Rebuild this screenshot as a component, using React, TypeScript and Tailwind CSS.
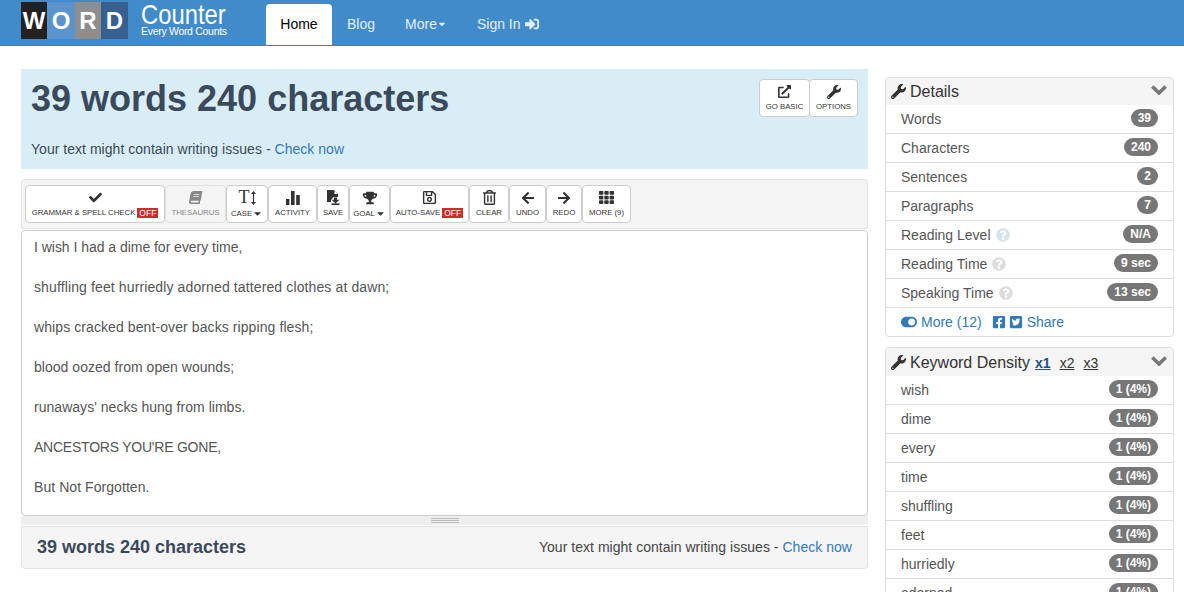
import type { ReactNode } from 'react';
import {
  FaArrowLeft,
  FaArrowRight,
  FaBook,
  FaCaretDown,
  FaCheck,
  FaExternalLinkAlt,
  FaFacebookSquare,
  FaQuestionCircle,
  FaRegSave,
  FaRegTrashAlt,
  FaSignInAlt,
  FaTh,
  FaToggleOn,
  FaTrophy,
  FaTwitterSquare,
  FaWrench,
} from 'react-icons/fa';

const poem = [
  { text: 'I wish I had a dime for every time,', spacing: 'tracking-[-0.03px]' },
  { text: 'shuffling feet hurriedly adorned tattered clothes at dawn;', spacing: 'tracking-[0.12px]' },
  { text: 'whips cracked bent-over backs ripping flesh;', spacing: 'tracking-[0.09px]' },
  { text: 'blood oozed from open wounds;', spacing: 'tracking-[0.03px]' },
  { text: "runaways' necks hung from limbs.", spacing: 'tracking-[0.03px]' },
  { text: "ANCESTORS YOU'RE GONE,", spacing: 'tracking-[-0.23px]' },
  { text: 'But Not Forgotten.', spacing: 'tracking-[0.06px]' },
];

const details = [
  { label: 'Words', value: '39' },
  { label: 'Characters', value: '240' },
  { label: 'Sentences', value: '2' },
  { label: 'Paragraphs', value: '7' },
  { label: 'Reading Level', value: 'N/A', help: true, blue: true },
  { label: 'Reading Time', value: '9 sec', help: true },
  { label: 'Speaking Time', value: '13 sec', help: true },
];

const keywords = ['wish', 'dime', 'every', 'time', 'shuffling', 'feet', 'hurriedly', 'adorned'];

function BarsIcon() {
  return (
    <svg width="14" height="14" viewBox="0 0 14 14" fill="currentColor">
      <rect x="0" y="8" width="3.4" height="6" />
      <rect x="5" y="0" width="3.6" height="14" />
      <rect x="10.2" y="4" width="3.6" height="10" />
    </svg>
  );
}

function SaveFileIcon() {
  return (
    <svg width="13" height="15" viewBox="0 0 13 15" fill="currentColor">
      <path d="M0 0h7l4 4v3H6.5L4 10v2H0z" />
      <path d="M7.5 0.5v3.5h3.5z" fill="#fff" />
      <path d="M7 7.5h3v2.2h2.4L8.5 13.6 4.6 9.7H7z" />
      <rect x="4.5" y="13.4" width="8" height="1.6" />
    </svg>
  );
}

function CaseIcon() {
  return (
    <span className="flex items-center">
      <span className="font-['Liberation_Serif',serif] text-[18px] leading-[15px]">T</span>
      <svg width="5" height="14" viewBox="0 0 5 14" fill="currentColor" className="ml-px">
        <path d="M2.5 0 5 3H3.1v8H5l-2.500 3L0 11h1.900V3H0z" />
      </svg>
    </span>
  );
}

function ChevronIcon() {
  return (
    <svg width="16" height="10" viewBox="0 0 16 10" fill="none" stroke="#777" strokeWidth="3.6" className="mb-[4px] ml-auto">
      <path d="M1.300 1.500 8 8l6.700-6.500" />
    </svg>
  );
}

function OffTag() {
  return <span className="ml-0.5 bg-[#c9302c] px-[2px] text-[8.5px] leading-[10px] text-white">OFF</span>;
}

function ToolButton({
  icon,
  children,
  className,
}: {
  icon: ReactNode;
  children: ReactNode;
  className: string;
}) {
  return (
    <button
      className={`flex h-[38px] shrink-0 flex-col items-center rounded border border-[#ccc] pt-[4px] text-[7.8px] leading-[10px] ${className}`}
    >
      <span className="flex h-[15px] items-center text-[15px]">{icon}</span>
      <span className="mt-[3px] flex items-center whitespace-nowrap">{children}</span>
    </button>
  );
}

function Badge({ children }: { children: ReactNode }) {
  return (
    <span className="-mt-[2px] rounded-[10px] bg-[#777] px-[7px] py-[3px] text-[12px] leading-[12px] font-bold text-white">
      {children}
    </span>
  );
}

function PanelHeader({ children, className }: { children: ReactNode; className: string }) {
  return (
    <div className={`flex items-center rounded-t bg-[#f5f5f5] pr-[6px] pl-[5px] text-[16px] text-[#333] ${className}`}>
      <FaWrench className="mr-[4px] text-[15px]" />
      {children}
      <ChevronIcon />
    </div>
  );
}

function Row({ children }: { children: ReactNode }) {
  return (
    <div className="flex h-[29px] items-center justify-between border-b border-[#ddd] px-[15px] text-[14px] text-[#555]">
      {children}
    </div>
  );
}

export default function App() {
  return (
    <div className="h-[592px] overflow-hidden bg-white font-['Liberation_Sans',Arial,sans-serif] text-[14px] text-[#333]">
      <nav className="flex h-[46px] border-b border-[#357ebd] bg-[#428bca] pl-[21px]">
        <div className="mt-[2px] flex h-[37px] w-[107px] self-start text-center text-[24px] leading-[37px] font-bold text-white">
          <span className="w-[26px] bg-[#222]">W</span>
          <span className="w-[28px] bg-[#5b93cc]">O</span>
          <span className="w-[26px] bg-[#8e8e8e]">R</span>
          <span className="w-[27px] bg-[#35608f]">D</span>
        </div>
        <div className="mt-[4px] ml-[13px] w-[90px] text-white">
          <div className="origin-left scale-x-[0.85] text-[28px] leading-[22px]">Counter</div>
          <div className="text-[10.5px] leading-[11px] tracking-[-0.3px]">Every Word Counts</div>
        </div>
        <ul className="ml-[35px] flex text-[14px] text-[#e3eef8]">
          <li className="mt-[4px] flex h-[41px] w-[66px] items-center justify-center rounded-t bg-white text-black">Home</li>
          <li className="flex items-center px-[15px] pt-[3px]">Blog</li>
          <li className="flex items-center px-[15px] pt-[3px]">
            More
            <FaCaretDown className="text-[10px]" />
          </li>
          <li className="flex items-center px-[15px] pt-[3px]">
            Sign In
            <FaSignInAlt className="ml-[4px] text-[14px]" />
          </li>
        </ul>
      </nav>

      <div className="flex gap-[17px] pl-[21px]">
        <main className="w-[847px] shrink-0">
          <section className="mt-[23px] flex h-[100px] justify-between bg-[#d9edf7] px-[10px]">
            <div>
              <h1 className="mt-[8px] text-[36px] leading-[44px] font-bold text-[#3a4a5c]">39 words 240 characters</h1>
              <p className="mt-[18px] text-[14px] leading-[20px] tracking-[0.03px] text-[#3c4a58]">
                Your text might contain writing issues - <a className="text-[#337ab7]">Check now</a>
              </p>
            </div>
            <div className="mt-[10px] flex h-[38px] text-[#333]">
              <ToolButton icon={<FaExternalLinkAlt className="text-[13px]" />} className="w-[51px] bg-white">
                GO BASIC
              </ToolButton>
              <ToolButton icon={<FaWrench className="text-[14px]" />} className="-ml-px w-[49px] bg-white">
                OPTIONS
              </ToolButton>
            </div>
          </section>

          <section className="mt-[10px] flex h-[50px] items-center rounded-t border border-[#e3e3e3] bg-[#f5f5f5] pl-[3px] text-[#333]">
            <ToolButton icon={<FaCheck className="text-[13px]" />} className="w-[140px] bg-white">
              GRAMMAR &amp; SPELL CHECK
              <OffTag />
            </ToolButton>
            <ToolButton
              icon={<FaBook className="-skew-x-12 text-[13px]" />}
              className="w-[61px] border-[#e0e0e0] bg-[#f5f5f5] text-[#888]"
            >
              THESAURUS
            </ToolButton>
            <ToolButton icon={<CaseIcon />} className="w-[42px] bg-white">
              CASE
              <FaCaretDown className="text-[11px]" />
            </ToolButton>
            <ToolButton icon={<BarsIcon />} className="w-[49px] bg-white">
              ACTIVITY
            </ToolButton>
            <ToolButton icon={<SaveFileIcon />} className="w-[32px] bg-white">
              SAVE
            </ToolButton>
            <ToolButton icon={<FaTrophy className="text-[14px]" />} className="w-[41px] bg-white">
              GOAL
              <FaCaretDown className="text-[11px]" />
            </ToolButton>
            <ToolButton icon={<FaRegSave className="text-[15px]" />} className="w-[79px] bg-white">
              AUTO-SAVE
              <OffTag />
            </ToolButton>
            <ToolButton icon={<FaRegTrashAlt className="text-[15px]" />} className="w-[40px] bg-white">
              CLEAR
            </ToolButton>
            <ToolButton icon={<FaArrowLeft className="text-[14px]" />} className="w-[37px] bg-white">
              UNDO
            </ToolButton>
            <ToolButton icon={<FaArrowRight className="text-[14px]" />} className="w-[36px] bg-white">
              REDO
            </ToolButton>
            <ToolButton icon={<FaTh className="text-[15px]" />} className="w-[49px] bg-white">
              MORE (9)
            </ToolButton>
          </section>

          <div className="mt-px flex h-[286px] flex-col gap-[20px] rounded border border-[#ccc] bg-white px-[12px] pt-[6px] text-[14px] leading-[20px] text-[#555]">
            {poem.map(line => (
              <p key={line.text} className={line.spacing}>
                {line.text}
              </p>
            ))}
          </div>

          <div className="flex h-[9px] flex-col items-center justify-center gap-px bg-[#eee]">
            <span className="h-px w-[28px] bg-[#bbb]" />
            <span className="h-px w-[28px] bg-[#bbb]" />
            <span className="h-px w-[28px] bg-[#bbb]" />
          </div>

          <section className="mt-px flex h-[43px] items-center justify-between rounded-b border border-[#e3e3e3] bg-[#f5f5f5] px-[15px]">
            <h2 className="text-[18px] font-bold text-[#3a4a5c]">39 words 240 characters</h2>
            <p className="tracking-[0.03px] text-[#444]">
              Your text might contain writing issues - <a className="text-[#337ab7]">Check now</a>
            </p>
          </section>
        </main>

        <aside className="mt-[31px] w-[289px] shrink-0">
          <div className="rounded border border-[#ddd]">
            <PanelHeader className="h-[27px]">Details</PanelHeader>
            {details.map(item => (
              <Row key={item.label}>
                <span className="flex items-center">
                  {item.label}
                  {item.help && (
                    <FaQuestionCircle
                      className={`ml-[5px] text-[14px] ${item.blue ? 'text-[#d5e3ef]' : 'text-[#ddd]'}`}
                    />
                  )}
                </span>
                <Badge>{item.value}</Badge>
              </Row>
            ))}
            <div className="flex h-[28px] items-center pl-[15px] text-[14px] text-[#337ab7]">
              <FaToggleOn className="mr-[4px] text-[16px]" />
              More (12)
              <FaFacebookSquare className="ml-[10px] text-[14px]" />
              <FaTwitterSquare className="mr-[4px] ml-[3px] text-[14px]" />
              Share
            </div>
          </div>

          <div className="mt-[10px] rounded border border-[#ddd]">
            <PanelHeader className="h-[28px] pt-px">
              Keyword Density
              <a className="mt-[2px] ml-[5px] text-[14px] font-bold text-[#23527c] underline">x1</a>
              <a className="mt-[2px] ml-[9px] text-[14px] text-[#333] underline">x2</a>
              <a className="mt-[2px] ml-[9px] text-[14px] text-[#333] underline">x3</a>
            </PanelHeader>
            {keywords.map(word => (
              <Row key={word}>
                {word}
                <Badge>1 (4%)</Badge>
              </Row>
            ))}
          </div>
        </aside>
      </div>
    </div>
  );
}
